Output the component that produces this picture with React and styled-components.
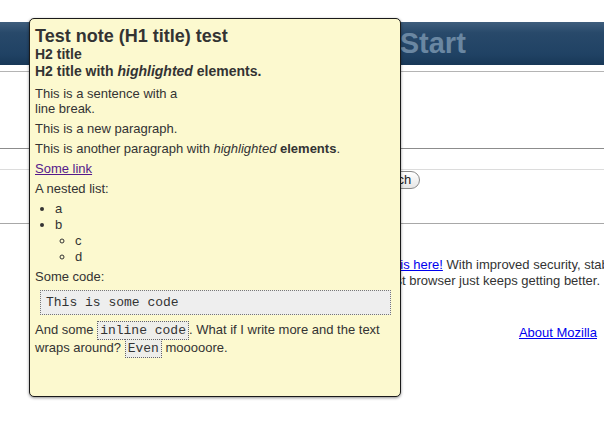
import React from 'react';
import styled, { createGlobalStyle } from 'styled-components';

const GlobalStyle = createGlobalStyle`
  html, body {
    margin: 0;
    padding: 0;
    background: #fff;
    overflow: hidden;
  }
  body {
    font-family: "Liberation Sans", Arial, sans-serif;
    font-size: 13px;
    color: #333;
  }
`;

const Page = styled.div`
  position: relative;
  width: 604px;
  height: 430px;
  overflow: hidden;
`;

const Header = styled.div`
  margin-top: 22px;
  height: 43px;
  padding-left: 295px;
  background: linear-gradient(#3f5e7d 0%, #28496a 25%, #204264 75%, #183857 100%);
  color: #6a87a2;
  font-weight: bold;
  font-size: 29px;
  line-height: 43px;
  white-space: nowrap;
`;

const Rule = styled.div`
  height: 0;
  margin-top: ${(p) => p.gap}px;
  border-top: 1px solid ${(p) => p.color};
`;

const SearchRow = styled.form`
  display: flex;
  align-items: center;
  gap: 6px;
  margin: 0;
  padding: 1px 0 0 147px;
  height: 18px;
`;

const SearchInput = styled.input`
  width: 200px;
  height: 16px;
  border: 1px solid #aaa;
  padding: 0 3px;
  font: inherit;
`;

const SearchButton = styled.button`
  height: 18px;
  padding: 0 8px;
  border: 1px solid #8a8a8a;
  border-radius: 9px;
  background: linear-gradient(#fff, #e6e6e6);
  font-family: "Liberation Sans", Arial, sans-serif;
  font-size: 13px;
  line-height: 16px;
  color: #222;
`;

const Intro = styled.p`
  margin: 33px 0 0;
  padding-left: 302px;
  line-height: 16px;
  white-space: nowrap;
  color: #333;
`;

const BlueLink = styled.a`
  color: #00e;
  text-decoration: underline;
`;

const Footer = styled.div`
  margin-top: 36px;
  padding-right: 7px;
  text-align: right;
  line-height: 16px;
`;

const Note = styled.div`
  position: absolute;
  top: 18px;
  left: 29px;
  box-sizing: border-box;
  width: 372px;
  height: 379px;
  padding: 7px 5px 5px;
  background: #fcf9cf;
  border: 1px solid #1a1a1a;
  border-radius: 5px;
  box-shadow: 0 1px 3px rgba(0, 0, 0, 0.45);
  color: #333;
  font-family: "Liberation Sans", Arial, sans-serif;
  font-size: 13px;
  line-height: 15px;
`;

const H1 = styled.h1`
  margin: 0;
  font-size: 18px;
  line-height: 20px;
  font-weight: bold;
`;

const H2 = styled.h2`
  margin: 0;
  font-size: 14px;
  line-height: 17px;
  font-weight: bold;
`;

const Para = styled.p`
  margin: ${(p) => p.top ?? 5}px 0 0;
  line-height: ${(p) => p.lh ?? 15}px;
`;

const NoteLink = styled.a`
  color: #551a8b;
  text-decoration: underline;
`;

const List = styled.ul`
  margin: ${(p) => (p.nested ? 0 : 5)}px 0 0;
  padding-left: 20px;
  list-style: ${(p) => (p.nested ? 'circle' : 'disc')};
  line-height: 16px;
`;

const CodeBlock = styled.pre`
  margin: 6px 4px 0 5px;
  padding: 4px 5px;
  background: #eee;
  border: 1px dotted #777;
  font-family: "Liberation Mono", "Courier New", monospace;
  font-size: 13px;
  line-height: 15px;
  color: #333;
`;

const InlineCode = styled.code`
  padding: 1px 2px;
  background: #eeeeea;
  border: 1px dotted #666;
  font-family: "Liberation Mono", "Courier New", monospace;
  font-size: 13px;
`;

export default function App() {
  return (
    <Page>
      <GlobalStyle />
      <Header>Firefox Start</Header>
      <Rule gap={6} color="#b4b4b4" />
      <Rule gap={76} color="#8c8c8c" />
      <Rule gap={20} color="#dcdcdc" />
      <SearchRow onSubmit={(e) => e.preventDefault()}>
        <SearchInput type="text" />
        <SearchButton type="submit">Search</SearchButton>
      </SearchRow>
      <Rule gap={34} color="#a8a8a8" />
      <Intro>
        Mozilla Firefox 3 <BlueLink href="#">is here!</BlueLink> With improved security, stability and speed,
        <br />
        the world's fastest browser just keeps getting better.
      </Intro>
      <Footer>
        <BlueLink href="#">About Mozilla</BlueLink>
      </Footer>

      <Note>
        <H1>Test note (H1 title) test</H1>
        <H2>H2 title</H2>
        <H2>
          H2 title with <i>highlighted</i> elements.
        </H2>
        <Para top={6}>
          This is a sentence with a
          <br />
          line break.
        </Para>
        <Para>This is a new paragraph.</Para>
        <Para>
          This is another paragraph with <i>highlighted</i> <b>elements</b>.
        </Para>
        <Para>
          <NoteLink href="#">Some link</NoteLink>
        </Para>
        <Para>A nested list:</Para>
        <List>
          <li>a</li>
          <li>
            b
            <List nested>
              <li>c</li>
              <li>d</li>
            </List>
          </li>
        </List>
        <Para top={4}>Some code:</Para>
        <CodeBlock>This is some code</CodeBlock>
        <Para top={6} lh={17}>
          And some <InlineCode>inline code</InlineCode>. What if I write more and the text wraps
          around? <InlineCode>Even</InlineCode> mooooore.
        </Para>
      </Note>
    </Page>
  );
}
